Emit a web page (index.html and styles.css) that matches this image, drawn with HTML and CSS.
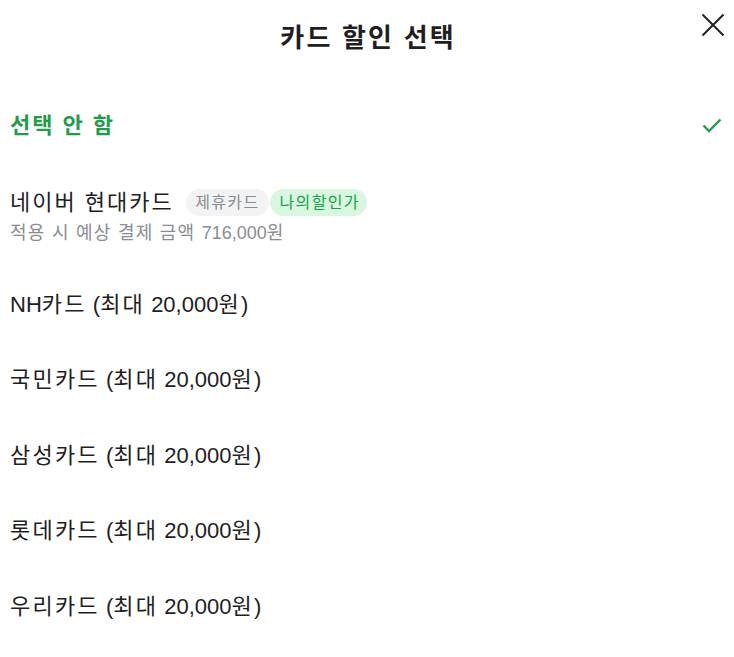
FILE: index.html
```html
<!DOCTYPE html>
<html lang="ko">
<head>
<meta charset="utf-8">
<title>카드 할인 선택</title>
<link rel="stylesheet" href="styles.css">
</head>
<body>
<div class="sheet">
  <header class="header">
    <h1 class="title">카드 할인 선택</h1>
    <button class="close" aria-label="닫기">
      <svg width="24" height="24" viewBox="0 0 24 24"><path d="M1.5 1.5L22.5 22.5M22.5 1.5L1.5 22.5" stroke="#222" stroke-width="2" fill="none"/></svg>
    </button>
  </header>
  <ul class="list">
    <li class="row selected">
      <span class="name kr">선택 안 함</span>
      <svg class="check" width="20" height="15" viewBox="0 0 20 15"><path d="M1.5 7.5L7 13L18.5 1.5" stroke="#1f9d4c" stroke-width="2.4" fill="none"/></svg>
    </li>
    <li class="row multi">
      <div class="line">
        <span class="name kr">네이버 현대카드</span>
        <span class="badge gray">제휴카드</span>
        <span class="badge green">나의할인가</span>
      </div>
      <div class="sub"><span class="k">적용 시 예상 결제 금액 </span>716,000<span class="k">원</span></div>
    </li>
    <li class="row"><span class="name">NH<span class="k">카드</span> (<span class="k">최대</span> 20,000<span class="k">원</span>)</span></li>
    <li class="row"><span class="name"><span class="k">국민카드</span> (<span class="k">최대</span> 20,000<span class="k">원</span>)</span></li>
    <li class="row"><span class="name"><span class="k">삼성카드</span> (<span class="k">최대</span> 20,000<span class="k">원</span>)</span></li>
    <li class="row"><span class="name"><span class="k">롯데카드</span> (<span class="k">최대</span> 20,000<span class="k">원</span>)</span></li>
    <li class="row"><span class="name"><span class="k">우리카드</span> (<span class="k">최대</span> 20,000<span class="k">원</span>)</span></li>
  </ul>
</div>
</body>
</html>
```
FILE: styles.css
```css
* { box-sizing: border-box; }
html, body { margin: 0; padding: 0; background: #fff; }
body {
  font-family: "Liberation Sans", Arial, "Noto Sans CJK KR", sans-serif;
  color: #1e1e23;
}
.sheet { width: 734px; }
.header {
  position: relative;
  height: 76px;
  display: flex;
  align-items: center;
  justify-content: center;
}
.title {
  margin: 0;
  font-size: 26px;
  font-weight: 700;
  line-height: 36px;
  letter-spacing: 0.085em;
  text-indent: 0.085em;
  color: #1e1e23;
}
.close {
  position: absolute;
  top: 13px;
  right: 9px;
  width: 24px;
  height: 24px;
  padding: 0;
  border: 0;
  background: none;
  display: block;
}
.close svg { display: block; }
.list {
  list-style: none;
  margin: 0;
  padding: 11.5px 0 0;
}
.row {
  display: flex;
  align-items: center;
  justify-content: space-between;
  padding: 22px 12px 22px 10px;
  font-size: 22px;
  line-height: 31.5px;
}
.kr { letter-spacing: 0.09em; }
.k { letter-spacing: 0.1em; }
.row.multi {
  flex-direction: column;
  align-items: flex-start;
  padding-top: 24px;
  padding-bottom: 20px;
}
.selected .name { color: #1f9d4c; font-weight: 700; }
.line { display: flex; align-items: center; }
.badge {
  display: inline-flex;
  align-items: center;
  height: 27px;
  padding: 0 8.5px 0 9.5px;
  border-radius: 14px;
  font-size: 16px;
  line-height: 27px;
  letter-spacing: 0.085em;
}
.line .name { margin-right: 12px; }
.badge.gray { background: #f2f3f5; color: #888b91; margin-right: 1px; padding-right: 9.5px; }
.badge.green { background: #d9f6e0; color: #16a34a; padding-right: 7.5px; }
.sub {
  margin-top: 1px;
  font-size: 18px;
  line-height: 27px;
  color: #8a8d93;
}
.sub .k { letter-spacing: 0.07em; }
.check { display: block; }
```
